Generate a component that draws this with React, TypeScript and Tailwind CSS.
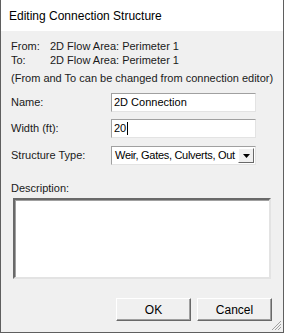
import React from "react";

const font = { fontFamily: '"Liberation Sans", Arial, sans-serif' };

export default function App() {
  return (
    <div
      className="relative w-[284px] h-[333px] bg-[#f0f0f0] border-x border-b border-[#5f5f5f] text-[11px] text-[#1a1a1a] overflow-hidden"
      style={font}
    >
      <div className="h-[31px] bg-white flex items-center pl-[8px] text-[12px] text-black">
        Editing Connection Structure
      </div>
      <div className="pl-[10px] pt-[8px]">
        <div className="flex leading-[14px]">
          <span className="w-[39px]">From:</span>
          <span>2D Flow Area: Perimeter 1</span>
        </div>
        <div className="flex leading-[14px]">
          <span className="w-[39px]">To:</span>
          <span>2D Flow Area: Perimeter 1</span>
        </div>
        <div className="leading-[14px] mt-[4px]">(From and To can be changed from connection editor)</div>

        <div className="flex items-center mt-[8px] h-[19px]">
          <span className="w-[100px]">Name:</span>
          <div className="w-[145px] h-[19px] bg-white border border-t-[#a0a0a0] border-l-[#a0a0a0] border-r-[#e3e3e3] border-b-[#e3e3e3] flex items-center px-[2px] text-[11px] text-black">
            2D Connection
          </div>
        </div>
        <div className="flex items-center mt-[7px] h-[19px]">
          <span className="w-[100px]">Width (ft):</span>
          <div className="w-[145px] h-[19px] bg-white border border-t-[#a0a0a0] border-l-[#a0a0a0] border-r-[#e3e3e3] border-b-[#e3e3e3] flex items-center px-[2px] text-[11px] text-black">
            20<span className="w-px h-[13px] bg-black ml-[1px]" />
          </div>
        </div>
        <div className="flex items-center mt-[8px] h-[19px]">
          <span className="w-[100px]">Structure Type:</span>
          <div className="w-[145px] h-[19px] bg-white border border-t-[#a0a0a0] border-l-[#a0a0a0] border-r-[#e3e3e3] border-b-[#e3e3e3] flex items-center text-[11px] text-black">
            <span className="flex-1 pl-[3px] whitespace-nowrap tracking-[-0.3px]">Weir, Gates, Culverts, Out</span>
            <div className="w-[16px] h-[15px] mr-[1px] bg-[#f0f0f0] border border-t-white border-l-white border-r-[#696969] border-b-[#696969] flex items-center justify-center shrink-0">
              <svg width="7" height="4" viewBox="0 0 7 4"><path d="M0 0h7L3.5 4z" fill="#000" /></svg>
            </div>
          </div>
        </div>

        <div className="mt-[16px] leading-[14px]">Description:</div>
        <div className="mt-[3px] ml-[2px] w-[258px] h-[81px] bg-white border-2 border-t-[#696969] border-l-[#696969] border-r-[#e3e3e3] border-b-[#e3e3e3] shadow-[inset_1px_1px_0_#a0a0a0]" />

        <div className="flex justify-end gap-[6px] mt-[19px] pr-[11px]">
          <button className="w-[75px] h-[23px] bg-[#f0f0f0] border border-t-white border-l-white border-r-[#696969] border-b-[#696969] shadow-[inset_-1px_-1px_0_#a0a0a0] text-[12px] text-black">
            OK
          </button>
          <button className="w-[75px] h-[23px] bg-[#f0f0f0] border border-t-white border-l-white border-r-[#696969] border-b-[#696969] shadow-[inset_-1px_-1px_0_#a0a0a0] text-[12px] text-black">
            Cancel
          </button>
        </div>
      </div>
      <svg className="absolute right-[1px] bottom-[1px]" width="12" height="12" viewBox="0 0 12 12">
        <path d="M11 2L2 11M11 5L5 11M11 8L8 11" stroke="#a0a0a0" strokeWidth="1" />
      </svg>
    </div>
  );
}
